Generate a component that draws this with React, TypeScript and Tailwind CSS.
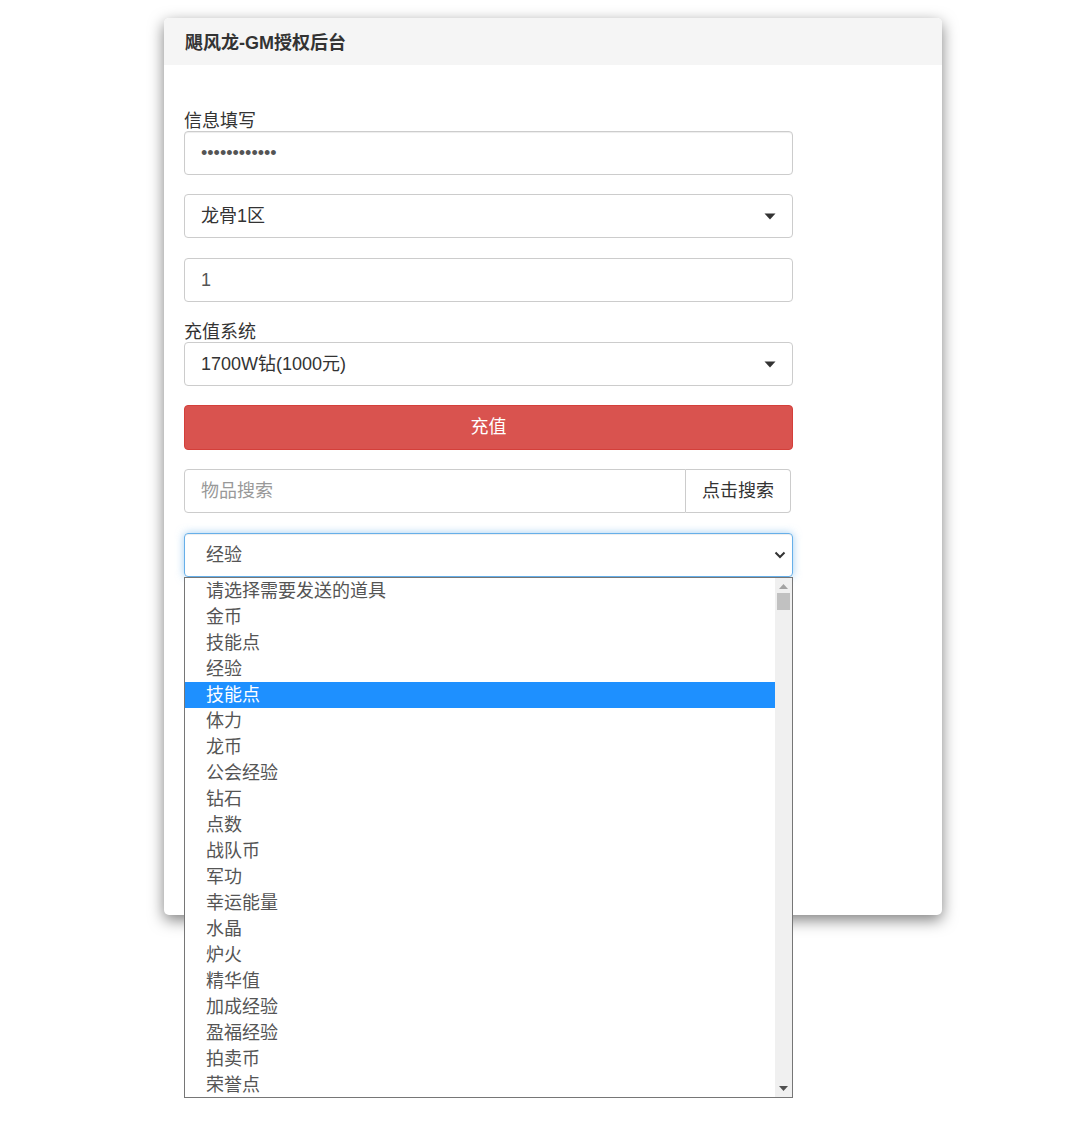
import React from "react";

const items = [
  "请选择需要发送的道具",
  "金币",
  "技能点",
  "经验",
  "技能点",
  "体力",
  "龙币",
  "公会经验",
  "钻石",
  "点数",
  "战队币",
  "军功",
  "幸运能量",
  "水晶",
  "炉火",
  "精华值",
  "加成经验",
  "盈福经验",
  "拍卖币",
  "荣誉点",
];

function Caret() {
  return (
    <svg width="12" height="7" viewBox="0 0 12 7" className="shrink-0">
      <path d="M0.5 0.5 L11.5 0.5 L6 6.5 Z" fill="#333" />
    </svg>
  );
}

export default function App() {
  const font = { fontFamily: '"Liberation Sans", "Noto Sans CJK SC", sans-serif' };
  return (
    <div className="min-h-[1130px] bg-white pt-[18px] pl-[164px]" style={font}>
      <div className="relative w-[778px] h-[897px] rounded-[5px] bg-white shadow-[0_5px_15px_rgba(0,0,0,0.5)]">
        <div className="h-[47px] bg-[#f5f5f5] rounded-t-[5px] flex items-center pl-[21px] pt-[3px] text-[18px] font-bold text-[#333]">
          飓风龙-GM授权后台
        </div>
        <div className="pl-[20px] pt-[44px] w-[629px] text-[18px] text-[#333]">
          <div className="leading-[22px] h-[22px] pt-[1px]">信息填写</div>
          <div className="h-[44px] border border-[#ccc] rounded-[4px] flex items-center pl-[16px] shadow-[inset_0_1px_1px_rgba(0,0,0,0.075)]">
            <span className="text-[#555]">••••••••••••</span>
          </div>
          <div className="mt-[19px] h-[44px] border border-[#ccc] rounded-[4px] flex items-center justify-between pl-[16px] pr-[16px]">
            <span>龙骨1区</span>
            <Caret />
          </div>
          <div className="mt-[20px] h-[44px] border border-[#ccc] rounded-[4px] flex items-center pl-[16px] text-[#555]">
            1
          </div>
          <div className="mt-[18px] leading-[22px] h-[22px] pt-[1px]">充值系统</div>
          <div className="h-[44px] border border-[#ccc] rounded-[4px] flex items-center justify-between pl-[16px] pr-[16px]">
            <span>1700W钻(1000元)</span>
            <Caret />
          </div>
          <div className="mt-[19px] h-[45px] bg-[#d9534f] border border-[#d43f3a] rounded-[4px] flex items-center justify-center text-white">
            充值
          </div>
          <div className="mt-[19px] h-[44px] flex w-[607px]">
            <div className="flex-1 border border-[#ccc] rounded-l-[4px] flex items-center pl-[16px] text-[#999]">
              物品搜索
            </div>
            <div className="w-[105px] border border-l-0 border-[#ccc] rounded-r-[4px] flex items-center justify-center text-[#333]">
              点击搜索
            </div>
          </div>
          <div className="relative mt-[20px]">
            <div className="h-[44px] border border-[#66afe9] rounded-[4px] flex items-center justify-between pl-[21px] pr-[6px] text-[#555] shadow-[inset_0_1px_1px_rgba(0,0,0,0.075),0_0_8px_rgba(102,175,233,0.6)]">
              <span>经验</span>
              <svg width="12" height="8" viewBox="0 0 12 8">
                <path d="M1.5 1.5 L6 6 L10.5 1.5" stroke="#333" strokeWidth="2" fill="none" />
              </svg>
            </div>
            <div className="absolute left-0 top-[44px] w-[609px] h-[521px] border border-[#767676] bg-white flex z-10">
              <div className="flex-1">
                {items.map((it, i) => (
                  <div
                    key={i}
                    className={
                      i === 4
                        ? "h-[26px] leading-[26px] pl-[21px] bg-[#1e90ff] text-white"
                        : "h-[26px] leading-[26px] pl-[21px] text-[#555]"
                    }
                  >
                    {it}
                  </div>
                ))}
              </div>
              <div className="w-[17px] bg-[#f0f0f0] flex flex-col items-center">
                <svg width="9" height="5" viewBox="0 0 9 5" className="mt-[6px]">
                  <path d="M0 5 L4.5 0 L9 5 Z" fill="#a3a3a3" />
                </svg>
                <div className="mt-[4px] w-[13px] h-[17px] bg-[#c1c1c1]" />
                <div className="flex-1" />
                <svg width="9" height="5" viewBox="0 0 9 5" className="mb-[6px]">
                  <path d="M0 0 L9 0 L4.5 5 Z" fill="#505050" />
                </svg>
              </div>
            </div>
          </div>
        </div>
      </div>
    </div>
  );
}
